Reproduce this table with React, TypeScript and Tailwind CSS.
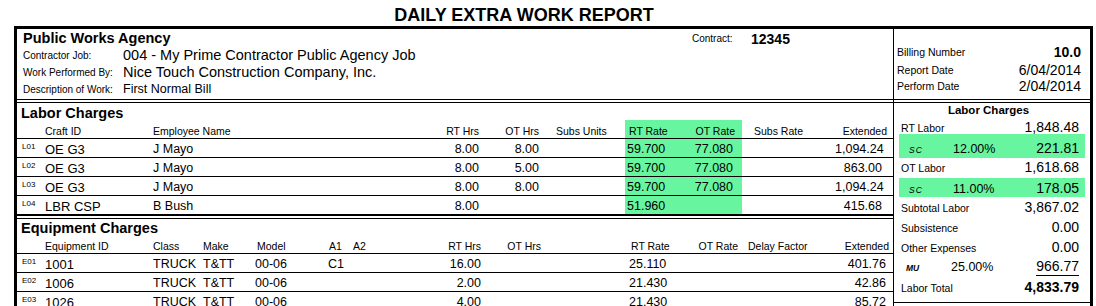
import React from 'react';

const labor = [
  { code: 'L01', craft: 'OE G3', emp: 'J Mayo', rt: '8.00', ot: '8.00', rtRate: '59.700', otRate: '77.080', ext: '1,094.24' },
  { code: 'L02', craft: 'OE G3', emp: 'J Mayo', rt: '8.00', ot: '5.00', rtRate: '59.700', otRate: '77.080', ext: '863.00' },
  { code: 'L03', craft: 'OE G3', emp: 'J Mayo', rt: '8.00', ot: '8.00', rtRate: '59.700', otRate: '77.080', ext: '1,094.24' },
  { code: 'L04', craft: 'LBR CSP', emp: 'B Bush', rt: '8.00', ot: '', rtRate: '51.960', otRate: '', ext: '415.68' },
];

const equipment = [
  { code: 'E01', id: '1001', cls: 'TRUCK', make: 'T&TT', model: '00-06', a1: 'C1', rt: '16.00', rtRate: '25.110', ext: '401.76' },
  { code: 'E02', id: '1006', cls: 'TRUCK', make: 'T&TT', model: '00-06', a1: '', rt: '2.00', rtRate: '21.430', ext: '42.86' },
  { code: 'E03', id: '1026', cls: 'TRUCK', make: 'T&TT', model: '00-06', a1: '', rt: '4.00', rtRate: '21.430', ext: '85.72' },
];

const laborCols = 'grid grid-cols-[23px_108px_267px_59px_60px_86px_58px_59px_93px_52px] pl-[5px]';
const equipCols = 'grid grid-cols-[23px_108px_50px_52px_73px_25px_69px_59px_60px_86px_58px_59px_93px_52px] pl-[5px]';

function DoubleLine() {
  return <div className="h-[4px] border-y border-black" />;
}

function ReportHeader() {
  return (
    <div className="h-[70px] pl-[6px] pt-[1px]">
      <div className="flex h-[17px] items-center">
        <span className="w-[669px] text-[14.5px] font-bold">Public Works Agency</span>
        <span className="w-[59px] text-[10px]">Contract:</span>
        <span className="text-[14px] font-bold">12345</span>
      </div>
      <div className="flex h-[17px] items-center">
        <span className="w-[100px] text-[10px]">Contractor Job:</span>
        <span className="text-[14.5px]">004 - My Prime Contractor Public Agency Job</span>
      </div>
      <div className="flex h-[17px] items-center">
        <span className="w-[100px] text-[10px]">Work Performed By:</span>
        <span className="text-[14.5px]">Nice Touch Construction Company, Inc.</span>
      </div>
      <div className="flex h-[17px] items-center">
        <span className="w-[100px] text-[10px]">Description of Work:</span>
        <span className="text-[12.5px]">First Normal Bill</span>
      </div>
    </div>
  );
}

function LaborTable() {
  return (
    <div>
      <div className="h-[17px] pt-[3px] pl-[4px] text-[14.5px] font-bold">Labor Charges</div>
      <div className={`${laborCols} h-[18px] text-[10.5px]`}>
        <div />
        <div className="pt-[6px]">Craft ID</div>
        <div className="pt-[6px]">Employee Name</div>
        <div className="pt-[6px] text-right">RT Hrs</div>
        <div className="pt-[6px] text-right">OT Hrs</div>
        <div className="pt-[6px] pl-[17px]">Subs Units</div>
        <div className="bg-[#68f59f] pt-[6px] pl-[4px]">RT Rate</div>
        <div className="bg-[#68f59f] pt-[6px] pr-[7px] text-right">OT Rate</div>
        <div className="pt-[6px] pl-[12px]">Subs Rate</div>
        <div className="pt-[6px] text-right">Extended</div>
      </div>
      <div className="border-b border-black">
        {labor.map((r) => (
          <div key={r.code} className={`${laborCols} h-[19px] border-t border-black text-[12.5px]`}>
            <div className="pt-[3.5px] text-[8px]">{r.code}</div>
            <div className="pt-[4px] text-[13px]">{r.craft}</div>
            <div className="pt-[4px]">{r.emp}</div>
            <div className="pt-[4px] text-right">{r.rt}</div>
            <div className="pt-[4px] text-right">{r.ot}</div>
            <div />
            <div className="bg-[#68f59f] pt-[4px] pl-[2px]">{r.rtRate}</div>
            <div className="bg-[#68f59f] pt-[4px] pr-[9px] text-right">{r.otRate}</div>
            <div />
            <div className="pt-[4px] pr-[5px] text-right">{r.ext}</div>
          </div>
        ))}
      </div>
    </div>
  );
}

function EquipmentTable() {
  return (
    <div>
      <div className="h-[16px] pt-[2px] pl-[4px] text-[14.5px] font-bold">Equipment Charges</div>
      <div className={`${equipCols} h-[18px] pt-[6px] text-[10.5px]`}>
        <div />
        <div>Equipment ID</div>
        <div>Class</div>
        <div>Make</div>
        <div className="pl-[2px]">Model</div>
        <div className="pl-[1px]">A1</div>
        <div>A2</div>
        <div className="text-right">RT Hrs</div>
        <div className="text-right">OT Hrs</div>
        <div />
        <div className="pl-[4px]">RT Rate</div>
        <div className="pr-[6px] text-right">OT Rate</div>
        <div className="pl-[4px]">Delay Factor</div>
        <div className="text-right">Extended</div>
      </div>
      {equipment.map((r) => (
        <div key={r.code} className={`${equipCols} h-[19px] border-t border-black pt-[4px] text-[12.5px]`}>
          <div className="-mt-[0.5px] text-[8px]">{r.code}</div>
          <div className="text-[13px]">{r.id}</div>
          <div>{r.cls}</div>
          <div>{r.make}</div>
          <div>{r.model}</div>
          <div>{r.a1}</div>
          <div />
          <div className="text-right">{r.rt}</div>
          <div />
          <div />
          <div className="pl-[2px]">{r.rtRate}</div>
          <div />
          <div />
          <div className="pr-[3px] text-right">{r.ext}</div>
        </div>
      ))}
    </div>
  );
}

function BillingPanel() {
  return (
    <div className="h-[70px] pl-[3px] pr-[9px] pt-[16px]">
      <div className="mb-[4px] flex h-[14px] items-center justify-between">
        <span className="text-[10.5px]">Billing Number</span>
        <span className="text-[14px] font-bold">10.0</span>
      </div>
      <div className="mb-[2px] flex h-[14px] items-center justify-between">
        <span className="text-[10.5px]">Report Date</span>
        <span className="text-[14px]">6/04/2014</span>
      </div>
      <div className="flex h-[14px] items-center justify-between">
        <span className="text-[10.5px]">Perform Date</span>
        <span className="text-[14px]">2/04/2014</span>
      </div>
    </div>
  );
}

function SummaryRow({ label, value, className, bold }: { label: string; value: string; className: string; bold?: boolean }) {
  return (
    <div className={`flex items-baseline pl-[2px] pr-[6px] ${className}`}>
      <span className="flex-1 text-[10.5px]">{label}</span>
      <span className={`text-[14px] ${bold ? 'font-bold' : ''}`}>{value}</span>
    </div>
  );
}

function LaborSummary() {
  return (
    <div className="h-[200px] border-b border-black px-[5px]">
      <div className="h-[15px] pt-[2px] pr-[7px] text-center text-[11.5px] font-bold">Labor Charges</div>
      <SummaryRow label="RT Labor" value="1,848.48" className="h-[16px] pt-[2px]" />
      <div className="flex h-[24px] items-baseline bg-[#68f59f] pt-[7px] pl-[10px] pr-[6px]">
        <span className="w-[44px] text-[8.5px] italic tracking-[1px]">SC</span>
        <span className="text-[12.5px]">12.00%</span>
        <span className="flex-1 text-right text-[14px]">221.81</span>
      </div>
      <SummaryRow label="OT Labor" value="1,618.68" className="h-[20px] pt-[2px]" />
      <div className="flex h-[19px] items-baseline bg-[#68f59f] pt-[3px] pl-[10px] pr-[6px]">
        <span className="w-[44px] text-[8.5px] italic tracking-[1px]">SC</span>
        <span className="text-[12.5px]">11.00%</span>
        <span className="flex-1 text-right text-[14px]">178.05</span>
      </div>
      <SummaryRow label="Subtotal Labor" value="3,867.02" className="h-[20px] pt-[3px]" />
      <SummaryRow label="Subsistence" value="0.00" className="h-[20px] pt-[3px]" />
      <SummaryRow label="Other Expenses" value="0.00" className="h-[20px] pt-[3px]" />
      <div className="flex h-[18px] items-baseline pt-[1px] pl-[7px] pr-[6px]">
        <span className="w-[45px] text-[8.5px] font-bold italic">MU</span>
        <span className="text-[12.5px]">25.00%</span>
        <span className="flex-1 text-right">
          <span className="inline-block border-b border-black pb-[2px] text-[14px]">966.77</span>
        </span>
      </div>
      <SummaryRow label="Labor Total" value="4,833.79" className="h-[27px] pt-[5px]" bold />
    </div>
  );
}

export default function App() {
  return (
    <div className="h-[306px] w-[1096px] overflow-hidden bg-white font-['Liberation_Sans',Arial,sans-serif] leading-none text-black">
      <div className="h-[26px] w-[1048px] pt-[6px] text-center text-[18px] font-bold">DAILY EXTRA WORK REPORT</div>
      <div className="ml-[14px] flex w-[1079px] border-x-[3px] border-t-[3px] border-black">
        <div className="w-[876px]">
          <ReportHeader />
          <DoubleLine />
          <LaborTable />
          <DoubleLine />
          <EquipmentTable />
        </div>
        <div className="w-[197px] border-l border-black">
          <BillingPanel />
          <DoubleLine />
          <LaborSummary />
        </div>
      </div>
    </div>
  );
}
